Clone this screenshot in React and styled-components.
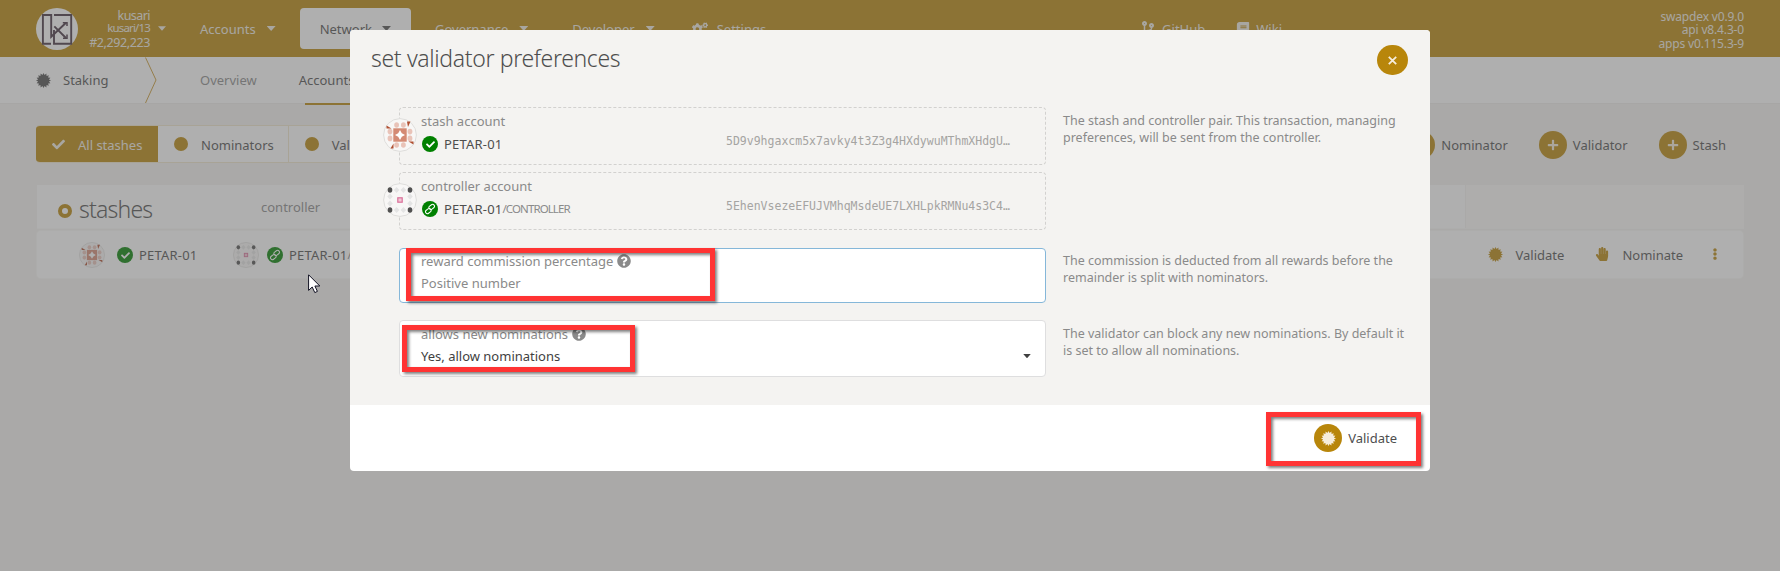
import React from 'react';
import styled, { createGlobalStyle, css } from 'styled-components';
import {
  FaBook,
  FaCheck,
  FaCodeBranch,
  FaCogs,
  FaEllipsisV,
  FaHandPaper,
  FaPlus,
  FaQuestionCircle,
} from 'react-icons/fa';

const GOLD = '#b8860b';
const TEXT = '#4e4e4e';
const MUTED = '#8a8a8a';

const GlobalStyle = createGlobalStyle`
  *, *::before, *::after { box-sizing: border-box; }
  body {
    margin: 0;
    background: #f4f3f1;
    color: ${TEXT};
    font-family: "Noto Sans", "Open Sans", sans-serif;
    font-size: 13px;
    line-height: 18px;
    overflow: hidden;
  }
  svg { display: block; flex: none; }
`;

const Page = styled.div`
  position: relative;
  width: 1780px;
  height: 571px;
  white-space: nowrap;
`;

/* ---- top bar ---- */

const TopBar = styled.header`
  display: flex;
  align-items: center;
  height: 57px;
  padding: 0 36px;
  background: ${GOLD};
  color: #f0ece2;
`;

const ChainInfo = styled.div`
  display: flex;
  flex-direction: column;
  width: 72px;
  height: 57px;
  padding-top: 9px;
  text-align: right;
`;

const ChainName = styled.div`
  font-size: 12.5px;
  line-height: 13px;
  letter-spacing: -0.55px;
`;

const ChainSpec = styled.div`
  font-size: 11.5px;
  line-height: 12px;
  letter-spacing: -0.85px;
`;

const BestBlock = styled.div`
  font-size: 12.5px;
  line-height: 18px;
  letter-spacing: -0.4px;
`;

const Caret = styled.span`
  flex: none;
  width: ${(p) => p.$size}px;
  height: ${(p) => p.$size / 2 + 0.5}px;
  margin-left: ${(p) => p.$gap}px;
  background: currentColor;
  clip-path: polygon(0 0, 100% 0, 50% 100%);
`;

const Menu = styled.nav`
  display: flex;
  gap: 4px;
  margin-left: 14px;
`;

const MenuItem = styled.div`
  display: flex;
  align-items: center;
  height: 41px;
  padding: 0 20px;
  border-radius: 4px;
  ${(p) =>
    p.$active &&
    css`
      background: #fff;
      color: ${TEXT};
    `}
`;

const SettingsItem = styled(MenuItem)`
  padding: 0 0 0 13px;
  gap: 9px;
`;

const ExternalLinks = styled.div`
  display: flex;
  gap: 31px;
  margin-left: auto;
`;

const ExternalLink = styled.div`
  display: flex;
  align-items: center;
  gap: 6px;
`;

const Versions = styled.div`
  width: 462px;
  margin-top: 3px;
  font-size: 12px;
  line-height: 13.5px;
  letter-spacing: -0.16px;
  text-align: right;
`;

/* ---- section tabs ---- */

const SectionBar = styled.div`
  display: flex;
  align-items: center;
  height: 46px;
  padding-left: 36px;
  background: #fff;
  box-shadow: 0 1px 0 #eeecea;
`;

const SectionName = styled.div`
  display: flex;
  align-items: center;
  gap: 12px;
  width: 109px;
`;

const SectionTab = styled.div`
  position: relative;
  display: flex;
  align-items: center;
  height: 46px;
  margin-left: ${(p) => p.$gap}px;
  color: ${(p) => (p.$active ? TEXT : MUTED)};

  &::after {
    content: '';
    display: ${(p) => (p.$active ? 'block' : 'none')};
    position: absolute;
    left: 6px;
    right: 0;
    bottom: -2px;
    height: 2px;
    background: ${GOLD};
  }
`;

/* ---- staking page ---- */

const Content = styled.main`
  padding: 22px 36px 0;
`;

const Controls = styled.div`
  display: flex;
  align-items: center;
  justify-content: space-between;
  height: 38px;
`;

const FilterGroup = styled.div`
  display: flex;
  height: 38px;
  border: 1px solid #f0e6cd;
  border-left: 0;
  border-radius: 4px;
  background: #fff;
  overflow: hidden;
`;

const Filter = styled.div`
  display: flex;
  align-items: center;
  gap: 13px;
  padding: 1px 14px 0 16px;
  border-right: 1px solid #f0e6cd;
  ${(p) =>
    p.$active &&
    css`
      width: 122px;
      padding-right: 0;
      border: 0;
      background: ${GOLD};
      color: #f0ece2;
    `}
`;

const Dot = styled.span`
  width: 14px;
  height: 14px;
  margin-bottom: 2px;
  border-radius: 50%;
  background: ${GOLD};
`;

const Actions = styled.div`
  display: flex;
  gap: 31px;
  padding: 1px 18px 0 0;
`;

const Action = styled.div`
  display: flex;
  align-items: center;
  gap: 6px;
`;

const RoundIcon = styled.span`
  display: flex;
  align-items: center;
  justify-content: center;
  width: 28px;
  height: 28px;
  border-radius: 50%;
  background: ${GOLD};
  color: #f6eddb;
`;

const TableHead = styled.div`
  display: flex;
  height: 44px;
  margin: 22px 0 2px 1px;
  border-bottom: 1px solid #fbfaf9;
`;

const HeadMain = styled.div`
  display: flex;
  align-items: center;
  width: 1428px;
  padding: 1px 0 0 21px;
  background: #fff;
  color: ${MUTED};
`;

const HeadRest = styled.div`
  flex: 1;
  margin-left: 1px;
  background: #fcfbf9;
`;

const Ring = styled.span`
  width: 14px;
  height: 14px;
  margin: 8px 7px 0 0;
  border: 4.5px solid ${GOLD};
  border-radius: 50%;
  background: #fff;
`;

const TableTitle = styled.h1`
  width: 182px;
  margin: 3px 0 0;
  color: ${TEXT};
  font-size: 23px;
  font-weight: 300;
  line-height: 28px;
  letter-spacing: -0.8px;
`;

const TableRow = styled.div`
  display: flex;
  align-items: center;
  height: 47px;
  margin: 0 1px;
  padding: 1px 22px 0 42px;
  border-radius: 4px;
  background: #fff;
  box-shadow: 0 0 0 1px #f9f8f6;
`;

const Account = styled.div`
  display: flex;
  align-items: center;
  width: ${(p) => p.$width}px;
`;

const Name = styled.span`
  letter-spacing: 0.2px;
`;

const StatusIcon = styled.span`
  display: flex;
  align-items: center;
  justify-content: center;
  width: 16px;
  height: 16px;
  margin: 0 6px 0 ${(p) => p.$gap || 0}px;
  border-radius: 50%;
  background: green;
  color: #fff;
`;

const SubName = styled.span`
  color: ${MUTED};
  font-size: 11.5px;
  letter-spacing: -0.9px;
`;

const RowActions = styled.div`
  display: flex;
  align-items: center;
  margin-left: auto;
  svg { color: ${GOLD}; margin-bottom: 2px; }
`;

const RowAction = styled.div`
  display: flex;
  align-items: center;
  gap: 13px;
  margin-right: ${(p) => p.$gap}px;
`;

/* ---- modal ---- */

const Dimmer = styled.div`
  position: fixed;
  inset: 0;
  display: flex;
  justify-content: center;
  align-items: flex-start;
  padding-top: 30px;
  background: rgba(96, 96, 96, 0.5);
`;

const Modal = styled.section`
  width: 1080px;
  height: 441px;
  border-radius: 4px;
  background: #fff;
  overflow: hidden;
`;

const ModalBody = styled.div`
  height: 375px;
  background: #f4f3f1;
`;

const ModalHeader = styled.div`
  display: flex;
  align-items: center;
  justify-content: space-between;
  height: 77px;
  padding: 0 22px 17px 21px;
`;

const ModalTitle = styled.h2`
  margin: 0 0 4px;
  font-size: 23px;
  font-weight: 300;
  line-height: 28px;
  letter-spacing: -0.35px;
`;

const CloseButton = styled(RoundIcon)`
  width: 31px;
  height: 30px;
  border-radius: 15px;
`;

const FormRow = styled.div`
  display: grid;
  grid-template-columns: 647px 1fr;
  column-gap: 17px;
  margin: 0 0 17px 49px;
`;

const Pair = styled.div`
  display: grid;
  gap: 7px;
  margin-bottom: 1px;
`;

const Help = styled.p`
  width: 350px;
  margin: ${(p) => p.$top}px 0 0;
  color: ${MUTED};
  font-size: 12.5px;
  line-height: 17px;
  white-space: normal;
`;

const AccountBox = styled.div`
  position: relative;
  display: flex;
  height: 58px;
  padding: 4px 0 0 21px;
  border: 1px dashed #d2d1cf;
  border-radius: 4px;
`;

const BoxIcon = styled.div`
  position: absolute;
  top: 10px;
  left: -17px;
`;

const AccountLabel = styled.div`
  width: 305px;
  color: ${MUTED};
`;

const AccountName = styled.div`
  display: flex;
  align-items: center;
  height: 20px;
  margin-top: 4px;
  color: ${TEXT};
`;

const Address = styled.div`
  margin-top: 20px;
  color: #a5a4a2;
  font-family: "DejaVu Sans Mono", monospace;
  font-size: 11.5px;
`;

const Field = styled.div`
  position: relative;
  height: ${(p) => p.$height}px;
  padding: ${(p) => (p.$focused ? 3 : 4)}px 14px 0 21px;
  border: 1px solid ${(p) => (p.$focused ? '#85b7d9' : '#dededf')};
  border-radius: 4px;
  background: #fff;
`;

const FieldLabel = styled.div`
  display: flex;
  align-items: center;
  gap: 4px;
  color: ${MUTED};
  svg { margin-bottom: 1px; }
`;

const FieldValue = styled.div`
  display: flex;
  align-items: center;
  justify-content: space-between;
  margin-top: 4px;
  color: ${(p) => (p.$placeholder ? MUTED : '#3f3f3f')};
`;

const ModalFooter = styled.div`
  display: flex;
  align-items: center;
  justify-content: flex-end;
  height: 66px;
  padding-right: 33px;
`;

/* ---- annotations ---- */

const Highlight = styled.div`
  position: absolute;
  left: ${(p) => p.$x}px;
  top: ${(p) => p.$y}px;
  width: ${(p) => p.$w}px;
  height: ${(p) => p.$h}px;
  border: 5px solid #ff3333;
  filter: drop-shadow(2px 2px 1.5px rgba(0, 0, 0, 0.5));
`;

const Pointer = styled.svg`
  position: absolute;
  left: 308px;
  top: 274px;
`;

const burst = Array.from({ length: 32 }, (_, i) => {
  const r = i % 2 ? 5.5 : 7.5;
  const a = (i * Math.PI) / 16;
  return `${(7.5 + r * Math.sin(a)).toFixed(2)},${(7.5 - r * Math.cos(a)).toFixed(2)}`;
}).join(' ');

const Badge = () => (
  <svg width="15" height="15" viewBox="0 0 15 15" fill="currentColor">
    <polygon points={burst} />
  </svg>
);

const LinkIcon = () => (
  <svg width="12" height="12" viewBox="-6 -6 12 12" fill="none" stroke="#fff" strokeWidth="1">
    <rect x="-4.9" y="-1.9" width="6" height="3.8" rx="1.9" transform="translate(-0.2 0.9) rotate(-38)" />
    <rect x="-1.1" y="-1.9" width="6" height="3.8" rx="1.9" transform="translate(0.2 -0.9) rotate(-38)" />
  </svg>
);

const Logo = () => (
  <svg width="42" height="42" viewBox="0 0 42 42" fill="none" stroke="#43303f" strokeWidth="1.9">
    <circle cx="21" cy="21" r="21" fill="#fff" stroke="none" />
    <path d="M15 35.7H6.9V7H15.2V28.7L30 14.7" />
    <path d="M18 7H35.2V35.7H18V22" />
    <path d="M18.3 18.3L30 30" />
    <path d="M26.8 14.7H31V18M27 30.3H31V26.5" strokeWidth="1.5" />
  </svg>
);

const StashIdenticon = ({ size }) => (
  <svg width={size} height={size} viewBox="-17 -17 34 34">
    <circle r="16.4" fill="#f8f7f6" stroke="#dedddb" />
    {[-3.4, 3.4].map((a) =>
      [-10, 10].map((b) => (
        <g key={`${a}${b}`} fill="#e9c3b8">
          <ellipse cx={a} cy={b} rx="2.4" ry="2.8" />
          <ellipse cx={b} cy={a} rx="2.4" ry="2.8" />
        </g>
      ))
    )}
    <g fill="#b04f31">
      <path d="M-13.5 -9.5V-6.5H-8.5Z" />
      <path d="M7 -13.5H10.5L8 -8Z" />
      <path d="M13.5 9.5V6.5H8.5Z" />
      <path d="M-6.5 8.5V13.5H-9.5Z" />
    </g>
    <rect x="-6.7" y="-6.7" width="13.4" height="13.4" fill="#d48a74" />
    <path d="M0 -5L1.8 -1.8L5 0L1.8 1.8L0 5L-1.8 1.8L-5 0L-1.8 -1.8Z" fill="#fff" />
  </svg>
);

const ControllerIdenticon = ({ size }) => (
  <svg width={size} height={size} viewBox="-17 -17 34 34">
    <circle r="16.4" fill="#f8f7f6" stroke="#dedddb" />
    {[-3.4, 3.4].map((a) =>
      [-10, 10].map((b) => (
        <g key={`${a}${b}`} fill="#e4e4e4">
          <path d={`M${a} ${b - 3}l2.8 3l-2.8 3l-2.8 -3z`} />
          <path d={`M${b} ${a - 3}l2.8 3l-2.8 3l-2.8 -3z`} />
        </g>
      ))
    )}
    {[-10, 10].map((x) =>
      [-10, 10].map((y) => <ellipse key={`${x}${y}`} cx={x} cy={y} rx="2.3" ry="2.7" fill="#505050" />)
    )}
    <rect x="-2.2" y="-2.2" width="4.4" height="4.4" fill="#f3c6d5" stroke="#d9709a" strokeWidth="1.2" />
  </svg>
);

const CloseIcon = () => (
  <svg width="9" height="9" viewBox="0 0 9 9" stroke="currentColor" strokeWidth="1.8" fill="none">
    <path d="M0.8 0.8L8.2 8.2M8.2 0.8L0.8 8.2" />
  </svg>
);

export default function App() {
  return (
    <Page>
      <GlobalStyle />
      <TopBar>
        <Logo />
        <ChainInfo>
          <ChainName>kusari</ChainName>
          <ChainSpec>kusari/13</ChainSpec>
          <BestBlock>#2,292,223</BestBlock>
        </ChainInfo>
        <Caret $size={8} $gap={8} />
        <Menu>
          <MenuItem>Accounts<Caret $size={9} $gap={11} /></MenuItem>
          <MenuItem $active>Network<Caret $size={9} $gap={10} /></MenuItem>
          <MenuItem>Governance<Caret $size={9} $gap={11} /></MenuItem>
          <MenuItem>Developer<Caret $size={9} $gap={11} /></MenuItem>
          <SettingsItem><FaCogs size={16} />Settings</SettingsItem>
        </Menu>
        <ExternalLinks>
          <ExternalLink><FaCodeBranch size={16} />GitHub</ExternalLink>
          <ExternalLink><FaBook size={14} />Wiki</ExternalLink>
        </ExternalLinks>
        <Versions>
          <div>swapdex v0.9.0</div>
          <div>api v8.4.3-0</div>
          <div>apps v0.115.3-9</div>
        </Versions>
      </TopBar>

      <SectionBar>
        <SectionName><Badge />Staking</SectionName>
        <svg width="12" height="46" viewBox="0 0 12 46" fill="none" stroke="#c99a35">
          <path d="M0.5 0.5L11 23L0.5 46" />
        </svg>
        <SectionTab $gap={43}>Overview</SectionTab>
        <SectionTab $gap={42} $active>Accounts</SectionTab>
      </SectionBar>

      <Content>
        <Controls>
          <FilterGroup>
            <Filter $active><FaCheck size={13} />All stashes</Filter>
            <Filter><Dot />Nominators</Filter>
            <Filter><Dot />Validators</Filter>
          </FilterGroup>
          <Actions>
            {['Nominator', 'Validator', 'Stash'].map((name) => (
              <Action key={name}>
                <RoundIcon><FaPlus size={12} /></RoundIcon>
                {name}
              </Action>
            ))}
          </Actions>
        </Controls>

        <TableHead>
          <HeadMain>
            <Ring />
            <TableTitle>stashes</TableTitle>
            controller
          </HeadMain>
          <HeadRest />
        </TableHead>
        <TableRow>
          <Account $width={154}>
            <StashIdenticon size={26} />
            <StatusIcon $gap={12}><FaCheck size={9} /></StatusIcon>
            <Name>PETAR-01</Name>
          </Account>
          <Account $width={200}>
            <ControllerIdenticon size={26} />
            <StatusIcon $gap={8}><LinkIcon /></StatusIcon>
            <Name>PETAR-01</Name><SubName>/CONTROLLER</SubName>
          </Account>
          <RowActions>
            <RowAction $gap={31}><Badge />Validate</RowAction>
            <RowAction $gap={26}><FaHandPaper size={14} />Nominate</RowAction>
            <FaEllipsisV size={12} />
          </RowActions>
        </TableRow>
      </Content>

      <Dimmer>
        <Modal>
          <ModalBody>
            <ModalHeader>
              <ModalTitle>set validator preferences</ModalTitle>
              <CloseButton><CloseIcon /></CloseButton>
            </ModalHeader>

            <FormRow>
              <Pair>
                <AccountBox>
                  <BoxIcon><StashIdenticon size={34} /></BoxIcon>
                  <AccountLabel>
                    stash account
                    <AccountName>
                      <StatusIcon $gap={1}><FaCheck size={9} /></StatusIcon>
                      <Name>PETAR-01</Name>
                    </AccountName>
                  </AccountLabel>
                  <Address>5D9v9hgaxcm5x7avky4t3Z3g4HXdywuMThmXHdgU…</Address>
                </AccountBox>
                <AccountBox>
                  <BoxIcon><ControllerIdenticon size={34} /></BoxIcon>
                  <AccountLabel>
                    controller account
                    <AccountName>
                      <StatusIcon $gap={1}><LinkIcon /></StatusIcon>
                      <Name>PETAR-01</Name><SubName>/CONTROLLER</SubName>
                    </AccountName>
                  </AccountLabel>
                  <Address>5EhenVsezeEFUJVMhqMsdeUE7LXHLpkRMNu4s3C4…</Address>
                </AccountBox>
              </Pair>
              <Help $top={5}>
                The stash and controller pair. This transaction, managing preferences, will be sent
                from the controller.
              </Help>
            </FormRow>

            <FormRow>
              <Field $height={55} $focused>
                <FieldLabel>reward commission percentage<FaQuestionCircle size={14} /></FieldLabel>
                <FieldValue $placeholder>Positive number</FieldValue>
              </Field>
              <Help $top={4}>
                The commission is deducted from all rewards before the remainder is split with
                nominators.
              </Help>
            </FormRow>

            <FormRow>
              <Field $height={57}>
                <FieldLabel>allows new nominations<FaQuestionCircle size={14} /></FieldLabel>
                <FieldValue>Yes, allow nominations<Caret $size={8} $gap={0} /></FieldValue>
              </Field>
              <Help $top={5}>
                The validator can block any new nominations. By default it is set to allow all
                nominations.
              </Help>
            </FormRow>
          </ModalBody>
          <ModalFooter>
            <Action><RoundIcon><Badge /></RoundIcon>Validate</Action>
          </ModalFooter>
        </Modal>
      </Dimmer>

      <Highlight $x={406} $y={248} $w={309} $h={53} />
      <Highlight $x={402} $y={325} $w={233} $h={47} />
      <Highlight $x={1266} $y={412} $w={155} $h={54} />
      <Pointer width="13" height="20" viewBox="0 0 13 20">
        <path d="M0.6 0.8V16.4L4.2 13L6.8 18.6L9.4 17.4L6.9 12H11.8Z" fill="#fff" stroke="#111122" />
      </Pointer>
    </Page>
  );
}
